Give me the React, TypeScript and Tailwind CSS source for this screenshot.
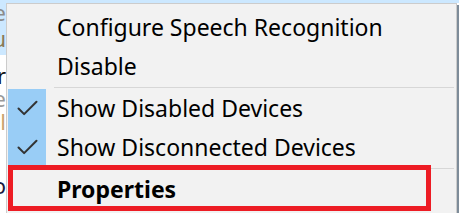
import { Check } from "lucide-react";

type Item = { label: string; checked?: boolean; bold?: boolean };

const groups: Item[][] = [
  [{ label: "Configure Speech Recognition" }, { label: "Disable" }],
  [
    { label: "Show Disabled Devices", checked: true },
    { label: "Show Disconnected Devices", checked: true },
  ],
  [{ label: "Properties", bold: true }],
];

// ends of words in the window behind the menu
const behind = [
  { ch: "e", cls: "h-[26px] bg-[#cce8ff] text-[#8c8c8c]" },
  { ch: "u", cls: "h-[29px] bg-[#cce8ff] text-[#8a7a55]" },
  { ch: "r", cls: "mt-[8px] h-[23px] text-[#111]" },
  { ch: "e", cls: "h-[23px] text-[#9a9a9a]" },
  { ch: "l", cls: "h-[64px] text-[#c9a36e]" },
  { ch: "o", cls: "h-[26px] text-[#1a1a40]" },
];

function Row({ item }: { item: Item }) {
  return (
    <div className="flex h-[39px] items-center">
      <div className={"flex h-full w-[38px] items-center justify-center " + (item.checked ? "bg-[#99cdf6]" : "")}>
        {item.checked && <Check className="h-[27px] w-[27px] text-[#333]" strokeWidth={1.8} />}
      </div>
      <div className={"pl-[11px] text-[23px] text-black " + (item.bold ? "font-bold" : "")}>{item.label}</div>
    </div>
  );
}

export default function App() {
  return (
    <div className="relative h-[213px] w-[459px] overflow-hidden bg-white" style={{ fontFamily: '"Noto Sans", "Open Sans", sans-serif' }}>
      {/* window underneath the menu */}
      <div className="flex h-full">
        <div className="flex w-[6px] flex-col overflow-hidden">
          {behind.map((b, i) => (
            <div key={i} className={"flex shrink-0 justify-end text-[22px] leading-[24px] " + b.cls}>
              <span>{b.ch}</span>
            </div>
          ))}
        </div>
        <div className="flex-1">
          <div className="h-[3px] bg-[#cce8ff]" />
        </div>
      </div>

      {/* context menu */}
      <div className="absolute left-[6px] top-[3px] h-[214px] w-[451px] border border-[#cccccc] bg-[#f2f2f2] pt-[4px] pl-[1px] shadow-[2px_2px_0_#7e8c99]">
        {groups.map((g, gi) => (
          <div key={gi}>
            {gi > 0 && <div className="my-[1px] ml-[46px] mr-[2px] h-px bg-[#d7d7d7]" />}
            {g.map((it) => (
              <Row key={it.label} item={it} />
            ))}
          </div>
        ))}

        {/* highlight around Properties */}
        <div className="absolute left-[1px] top-[161px] h-[46px] w-[423px] border-[5px] border-[#ed1c24]" />
      </div>
    </div>
  );
}
